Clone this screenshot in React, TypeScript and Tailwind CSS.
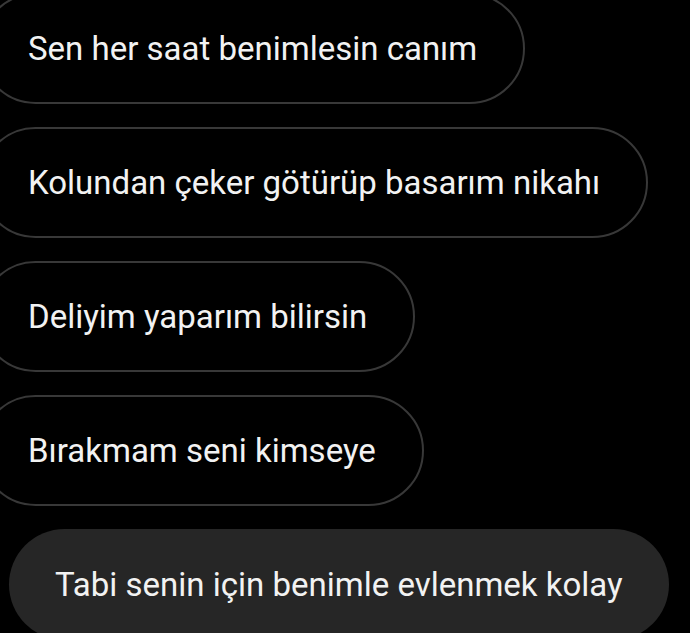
import React from 'react';

const messages = [
  'Sen her saat benimlesin canım',
  'Kolundan çeker götürüp basarım nikahı',
  'Deliyim yaparım bilirsin',
  'Bırakmam seni kimseye',
];

export default function App() {
  return (
    <div
      className="h-[633px] w-[690px] overflow-hidden bg-black text-[#f2f2f2]"
      style={{ fontFamily: 'Roboto, "Noto Sans", sans-serif' }}
    >
      <div className="-mt-[7px] flex flex-col items-start gap-[23px]">
        {messages.map((m) => (
          <div
            key={m}
            className="-ml-5 flex h-[111px] items-center rounded-full border-2 border-[#383838] px-[46px] text-[33px] leading-none whitespace-nowrap"
          >
            {m}
          </div>
        ))}
        <div className="ml-[9px] flex h-[111px] items-center rounded-full bg-[#262626] px-[46px] text-[33px] leading-none whitespace-nowrap">
          Tabi senin için benimle evlenmek kolay
        </div>
      </div>
    </div>
  );
}
